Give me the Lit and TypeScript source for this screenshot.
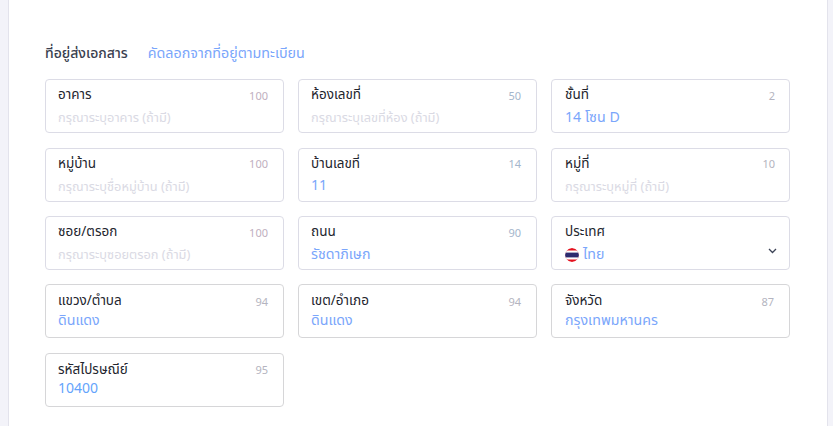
import { LitElement, html, css } from "lit";
import { customElement } from "lit/decorators.js";

interface F { label: string; count: string; value?: string; ph?: string; flag?: boolean; tone?: string; cls?: string }

const fields: F[] = [
  { label: "อาคาร", count: "100", ph: "กรุณาระบุอาคาร (ถ้ามี)", tone: "pink" },
  { label: "ห้องเลขที่", count: "50", ph: "กรุณาระบุเลขที่ห้อง (ถ้ามี)", tone: "blue" },
  { label: "ชั้นที่", count: "2", value: "14 โซน D", cls: "end" },
  { label: "หมู่บ้าน", count: "100", ph: "กรุณาระบุชื่อหมู่บ้าน (ถ้ามี)", tone: "pink" },
  { label: "บ้านเลขที่", count: "14", value: "11", tone: "blue" },
  { label: "หมู่ที่", count: "10", ph: "กรุณาระบุหมู่ที่ (ถ้ามี)", cls: "end" },
  { label: "ซอย/ตรอก", count: "100", ph: "กรุณาระบุซอยตรอก (ถ้ามี)", tone: "pink" },
  { label: "ถนน", count: "90", value: "รัชดาภิเษก", tone: "blue" },
  { label: "ประเทศ", count: "", value: "ไทย", flag: true, cls: "end" },
  { label: "แขวง/ตำบล", count: "94", value: "ดินแดง", cls: "alt" },
  { label: "เขต/อำเภอ", count: "94", value: "ดินแดง", cls: "alt" },
  { label: "จังหวัด", count: "87", value: "กรุงเทพมหานคร", cls: "alt end" },
  { label: "รหัสไปรษณีย์", count: "95", value: "10400", cls: "alt zip" },
];

@customElement("app-root")
export class AppRoot extends LitElement {
  static styles = css`
    :host {
      display: block;
      height: 426px;
      overflow: hidden;
      background: #f3f3f9;
      padding: 0 5px 0 8px;
      box-sizing: border-box;
      font-family: "Noto Sans Thai", "Noto Sans Thai Looped", "Noto Sans", "Liberation Sans", sans-serif;
    }
    .panel {
      background: #fff;
      height: 426px;
      box-sizing: border-box;
      border-left: 1px solid #e3e3ec;
      border-right: 1px solid #e3e3ec;
      padding: 42px 0 0 36px;
    }
    .head {
      display: flex;
      align-items: center;
      gap: 20px;
      height: 22px;
      margin-bottom: 15.4px;
    }
    .title { font-size: 14px; font-weight: 500; color: #3a3f50; }
    .copy { font-size: 14.3px; color: #7aa6fb; }
    .grid {
      display: grid;
      grid-template-columns: repeat(3, 239px);
      grid-auto-rows: 54px;
      column-gap: 14px;
      row-gap: 14.33px;
    }
    .card {
      position: relative;
      box-sizing: border-box;
      border: 1px solid #dcdce6;
      border-radius: 4px;
      padding: 4px 15px 0 12px;
      background: #fff;
    }
    .card.end { padding-left: 13px; padding-right: 14px; }
    .card.alt { border-color: #d6d6d8; padding-top: 6px; }
    .card.alt.end { padding-right: 15px; }
    .top { display: flex; justify-content: space-between; align-items: center; height: 22px; }
    .alt .top { height: 20px; }
    .label { font-size: 13.5px; color: #23252e; }
    .count { font-size: 11px; color: #b4b4c0; font-family: "Noto Sans", sans-serif; }
    .count.pink { color: #c0afc0; }
    .count.blue { color: #a4b6cc; }
    .val {
      display: flex;
      align-items: center;
      gap: 4px;
      height: 24px;
      font-size: 14.2px;
      color: #7aa6fb;
    }
    .v { margin-bottom: 2px; }
    .alt .val { margin-top: -2px; }
    .zip .val { margin-top: -3px; color: #64a4fc; font-size: 14px; }
    .zip .v { margin-bottom: 0; }
    .ph { color: #dadae4; font-size: 12.8px; }
    .flag { width: 14px; height: 14px; border-radius: 50%; flex: none; display: block; }
    .chev { position: absolute; right: 12px; top: 31px; width: 9px; height: 6px; }
  `;

  private flag() {
    return html`<svg class="flag" viewBox="0 0 14 14">
      <defs><clipPath id="c"><circle cx="7" cy="7" r="7"></circle></clipPath></defs>
      <g clip-path="url(#c)">
        <rect width="14" height="14" fill="#e4121f"></rect>
        <rect y="2.5" width="14" height="9" fill="#fff"></rect>
        <rect y="4.6" width="14" height="4.8" fill="#2d2a6e"></rect>
      </g>
    </svg>`;
  }

  render() {
    return html`<div class="panel">
      <div class="head">
        <span class="title">ที่อยู่ส่งเอกสาร</span>
        <span class="copy">คัดลอกจากที่อยู่ตามทะเบียน</span>
      </div>
      <div class="grid">
        ${fields.map(
          (f) => html`<div class="card ${f.cls ?? ""}">
            <div class="top">
              <span class="label">${f.label}</span>
              <span class="count ${f.tone ?? ""}">${f.count}</span>
            </div>
            <div class="val">
              ${f.flag ? this.flag() : ""}
              ${f.value ? html`<span class="v">${f.value}</span>` : html`<span class="ph">${f.ph}</span>`}
            </div>
            ${f.flag
              ? html`<svg class="chev" viewBox="0 0 9 6"><path d="M1 1 L4.5 4.5 L8 1" fill="none" stroke="#3c4356" stroke-width="1.3"></path></svg>`
              : ""}
          </div>`
        )}
      </div>
    </div>`;
  }
}
